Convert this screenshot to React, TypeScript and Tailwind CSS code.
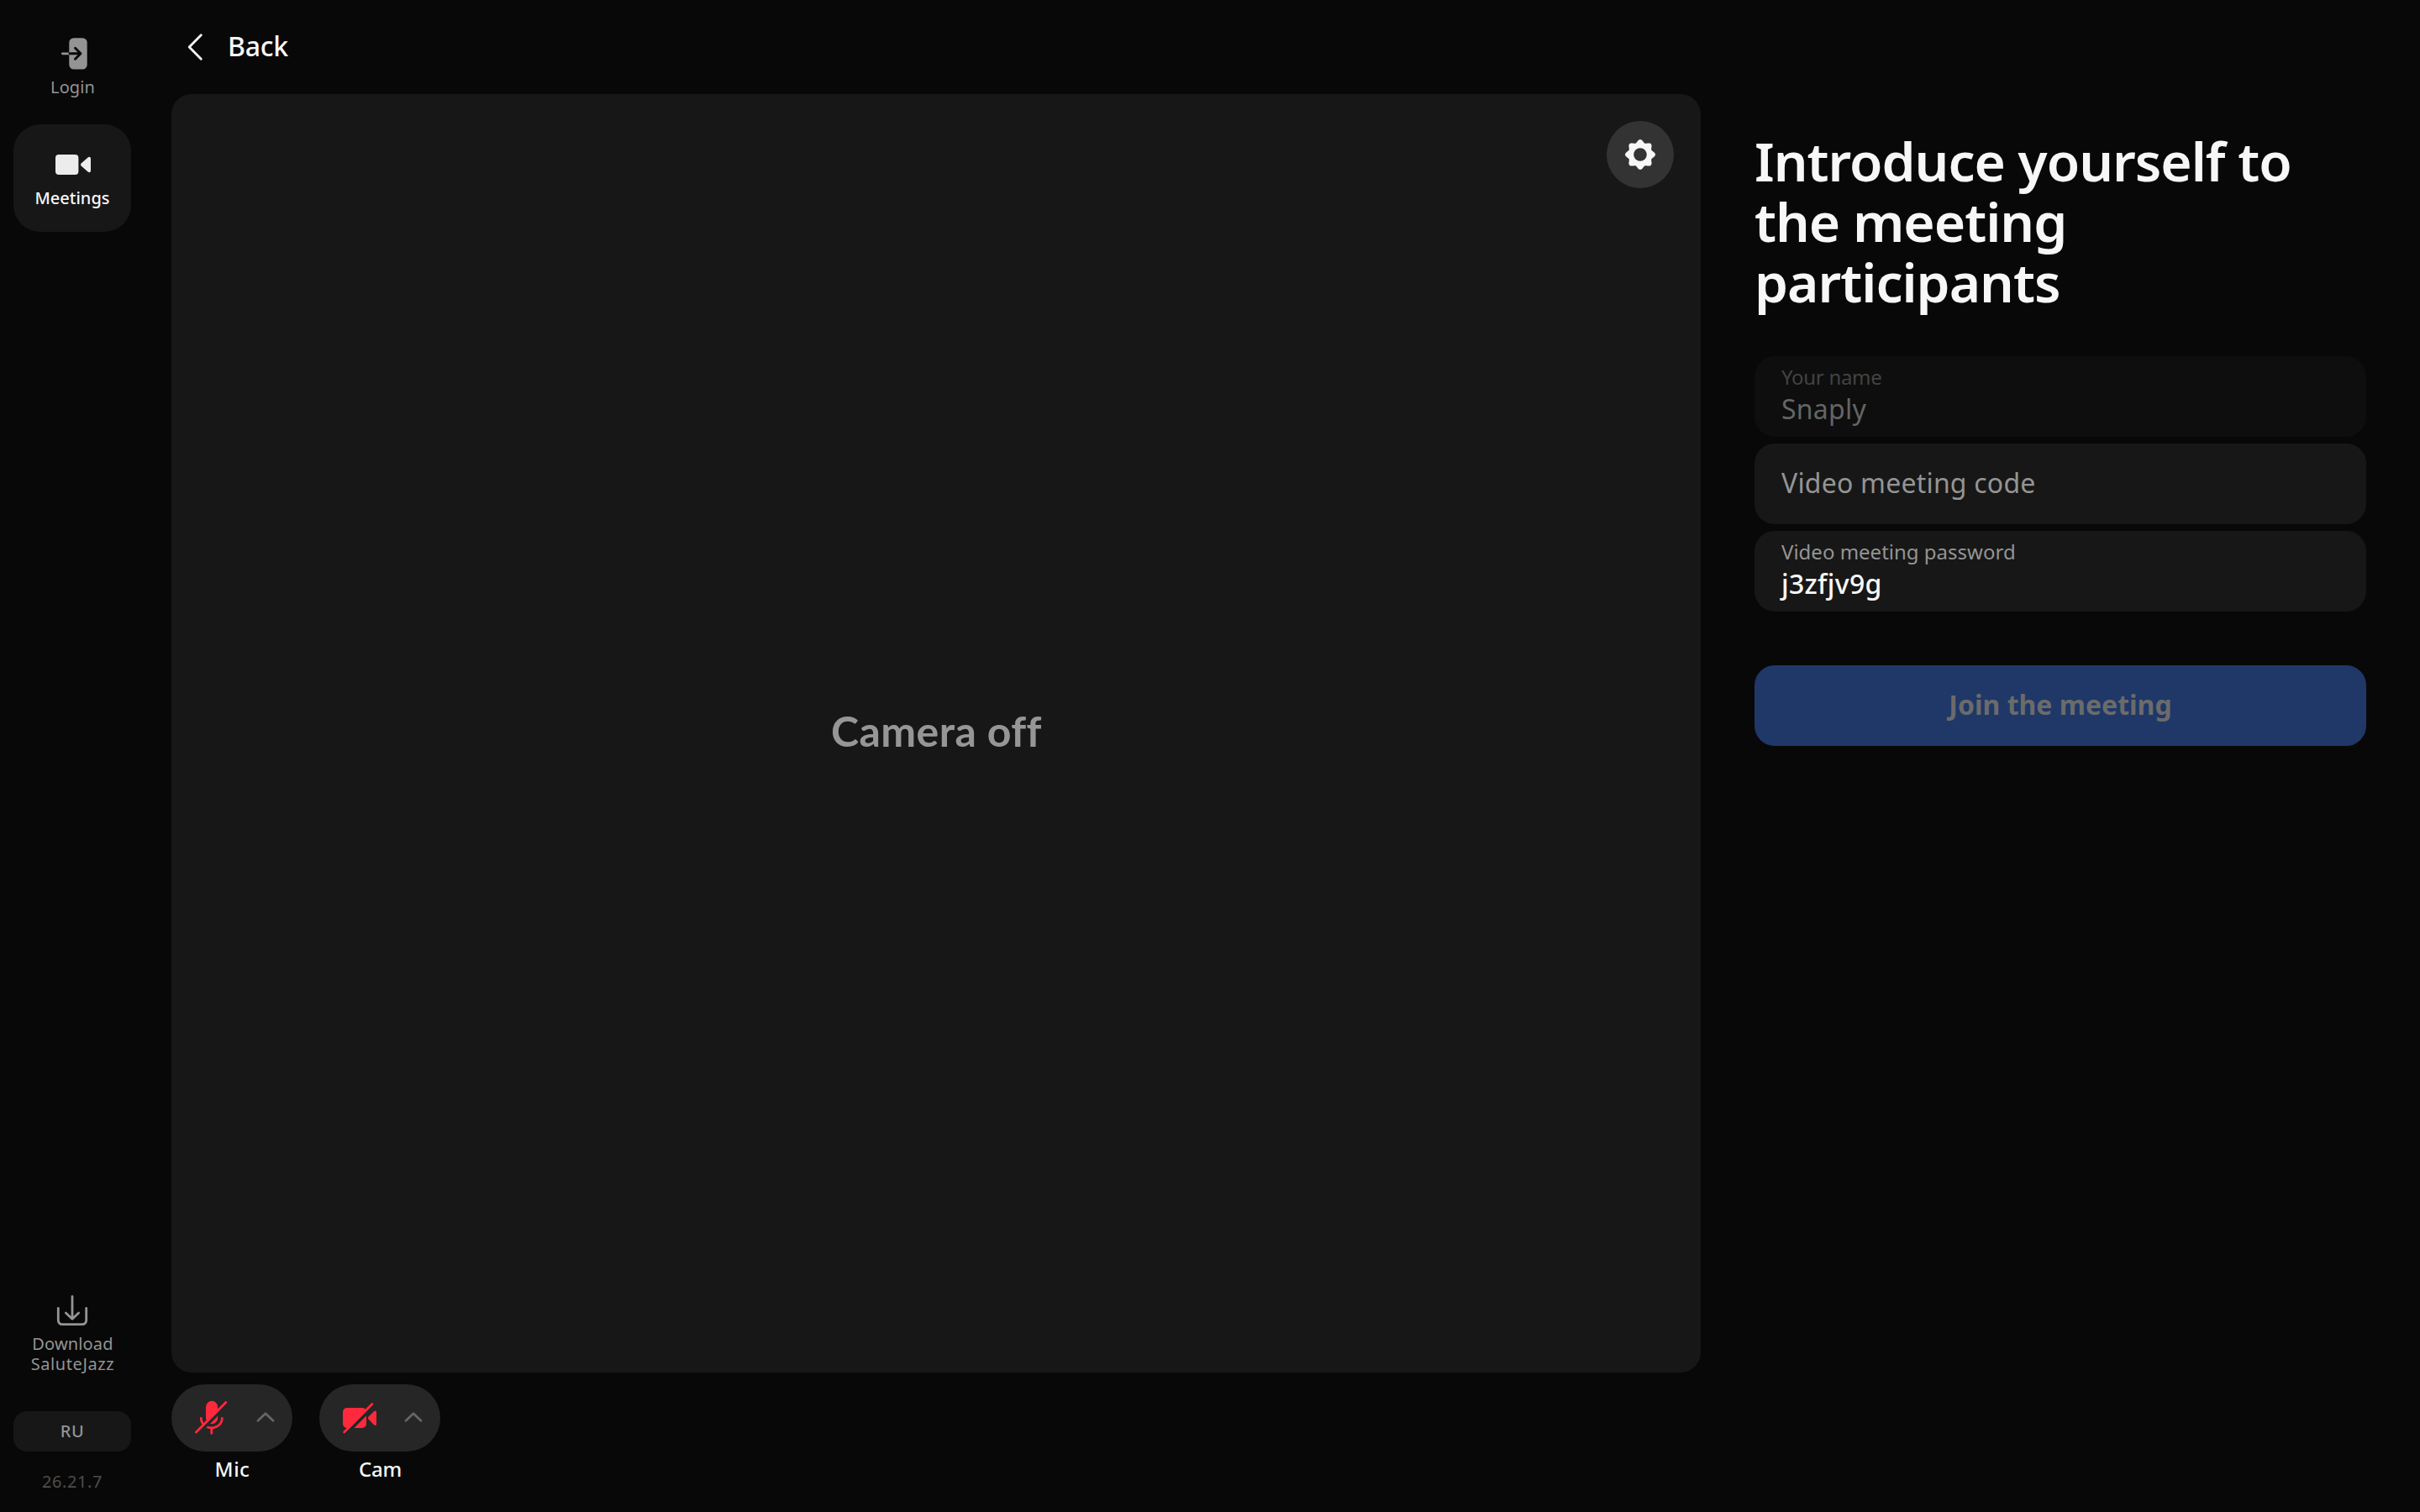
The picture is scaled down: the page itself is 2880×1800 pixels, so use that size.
import type { ReactNode } from 'react';

// Soft eight-tooth outline around the centre of a 48px box
const gearPath =
  Array.from({ length: 144 }, (_, i) => {
    const a = (i / 144) * Math.PI * 2;
    const r = 16.2 + 1.8 * Math.cos(a * 8);
    return `${i ? 'L' : 'M'}${(24 + r * Math.cos(a)).toFixed(2)} ${(24 + r * Math.sin(a)).toFixed(2)}`;
  }).join('') + 'Z';

const LoginIcon = () => (
  <svg viewBox="0 0 48 48" className="size-12" fill="none" strokeLinecap="round" strokeLinejoin="round">
    <rect x="20.3" y="5.2" width="21.4" height="37.3" rx="5.5" fill="currentColor" />
    <path d="M12.3 23.8H20" stroke="currentColor" strokeWidth="2.8" />
    <path d="M21 23.8H33.5M27.5 17.3L34 23.8L27.5 30.3" stroke="#080808" strokeWidth="2.9" />
  </svg>
);

const MeetingsIcon = () => (
  <svg viewBox="0 0 48 48" className="size-12 text-[#ececec]" fill="currentColor">
    <rect x="4" y="12" width="27.4" height="24" rx="4" />
    <path d="M34.6 22.6L42.6 15.4C44.2 14 46 15 46 17V31C46 33 44.2 34 42.6 32.6L34.6 25.4Q33.2 24 34.6 22.6Z" />
  </svg>
);

const DownloadIcon = () => (
  <svg
    viewBox="0 0 48 48"
    className="size-12"
    fill="none"
    stroke="currentColor"
    strokeWidth="2.8"
    strokeLinecap="round"
    strokeLinejoin="round"
  >
    <path d="M24 7.3V33.8M16.4 27L24 34.2L31.6 27" />
    <path d="M7.3 21.3V35.5Q7.3 40.7 12.5 40.7H35.5Q40.7 40.7 40.7 35.5V21.3" />
  </svg>
);

const BackIcon = () => (
  <svg viewBox="0 0 48 48" className="size-12" fill="none" stroke="currentColor" strokeWidth="2.8" strokeLinecap="round" strokeLinejoin="round">
    <path d="M31.3 9.7L17.2 24L31.3 38.3" />
  </svg>
);

const GearIcon = () => (
  <svg viewBox="0 0 48 48" className="size-12">
    <path d={gearPath} fill="currentColor" />
    <circle cx="24" cy="24" r="7.8" fill="#333333" />
  </svg>
);

const MicOffIcon = () => (
  <svg viewBox="0 0 48 48" className="size-12" fill="none" strokeLinecap="round">
    <rect x="17" y="3.8" width="14.2" height="27.4" rx="7.1" fill="currentColor" />
    <path d="M11.3 24.5A12.5 11.3 0 0 0 36.3 24.5M23.8 36V42.3" stroke="currentColor" strokeWidth="2.8" />
    <path d="M5 45.6L44.5 6.1" stroke="#262626" strokeWidth="3.4" strokeLinecap="butt" />
    <path d="M5.4 41L40.8 5.6" stroke="currentColor" strokeWidth="2.8" />
  </svg>
);

const CamOffIcon = () => (
  <svg viewBox="0 0 48 48" className="size-12" fill="none" strokeLinecap="round">
    <rect x="4" y="12" width="28" height="24" rx="5" fill="currentColor" />
    <path
      d="M34.5 22.6L41 16.2C42.4 14.8 44 15.5 44 17.4V31C44 33 42.4 33.6 41 32.2L34.5 25.6Q33.2 24.1 34.5 22.6Z"
      fill="currentColor"
    />
    <path d="M4 46.6L44.5 6.1" stroke="#262626" strokeWidth="4" strokeLinecap="butt" />
    <path d="M5.6 40.9L38.9 7.4" stroke="currentColor" strokeWidth="2.8" />
  </svg>
);

const ChevronUpIcon = () => (
  <svg viewBox="0 0 32 32" className="size-8 text-[#666666]" fill="none" stroke="currentColor" strokeWidth="2.8" strokeLinecap="round" strokeLinejoin="round">
    <path d="M7 19.3L16 10.7L25 19.3" />
  </svg>
);

const DeviceButton = ({ icon, label }: { icon: ReactNode; label: ReactNode }) => (
  <div className="flex w-36 flex-col items-center">
    <button className="flex h-20 w-36 items-center gap-6 rounded-full bg-[#262626] pl-6 text-[#ff293e]">
      {icon}
      <ChevronUpIcon />
    </button>
    <span className="mt-[5px] pl-px text-2xl leading-8 font-medium text-[#f7f7f7]">{label}</span>
  </div>
);

const App = () => {
  return (
    <div className="flex h-[1800px] w-[2880px] bg-[#080808] font-['Noto_Sans',sans-serif] text-[#f7f7f7]">
      {/* Sidebar */}
      <aside className="flex w-[172px] flex-col px-4 pt-4 text-center text-xl leading-6 text-[#949494]">
        <button className="flex h-32 flex-col items-center gap-1 pt-6">
          <LoginIcon />
          <span className="pl-px tracking-[0.1px]">Login</span>
        </button>
        <button className="mt-1 flex h-32 flex-col items-center gap-1 rounded-[32px] bg-[#171717] pt-6 text-[#f7f7f7]">
          <MeetingsIcon />
          <span className="font-medium">Meetings</span>
        </button>

        <div className="mt-auto flex flex-col items-center gap-1">
          <DownloadIcon />
          <div className="pl-px">
            <p className="tracking-[0.15px]">Download</p>
            <p className="tracking-[0.6px]">SaluteJazz</p>
          </div>
        </div>
        <button className="mt-11 h-12 rounded-2xl bg-[#171717] font-medium tracking-[0.5px]">RU</button>
        <p className="mt-6 mb-6 tracking-[0.6px] text-[#4d4d4d]">26.21.7</p>
      </aside>

      {/* Preview */}
      <main className="ml-8 flex w-[1820px] flex-col">
        <header className="flex h-28 items-center gap-[15px] pl-1">
          <BackIcon />
          <span className="pb-[2px] text-[32px] leading-10 font-medium tracking-[-0.2px]">Back</span>
        </header>
        <section className="relative flex h-[1522px] items-center justify-center rounded-3xl bg-[#171717]">
          <button className="absolute top-8 right-8 flex size-20 items-center justify-center rounded-full bg-[#333333]">
            <GearIcon />
          </button>
          <p className="pb-[7px] pl-px font-['Lato',sans-serif] text-[50px] leading-[56px] font-bold tracking-[0.4px] text-[#969696]">
            Camera off
          </p>
        </section>
        <div className="mt-[14px] flex gap-8">
          <DeviceButton icon={<MicOffIcon />} label={<span className="tracking-[0.5px]">Mic</span>} />
          <DeviceButton icon={<CamOffIcon />} label={<span className="tracking-[-0.2px]">Cam</span>} />
        </div>
      </main>

      {/* Join form */}
      <section className="ml-16 w-[728px] pt-[156px]">
        <h1 className="text-[64px] leading-[72px] font-semibold tracking-[-1px]">
          Introduce yourself to
          <br />
          the meeting
          <br />
          participants
        </h1>
        <div className="mt-[52px] flex flex-col gap-2">
          <div className="h-24 rounded-3xl bg-[#0e0e0e] px-8 pt-[9px]">
            <p className="text-2xl leading-8 tracking-[-0.3px] text-[#434343]">Your name</p>
            <p className="mt-[2px] text-[32px] leading-10 tracking-[0.25px] text-[#656565]">Snaply</p>
          </div>
          <div className="flex h-24 items-center rounded-3xl bg-[#171717] px-8 pb-[2px]">
            <p className="text-[32px] leading-10 tracking-[0.2px] text-[#949494]">Video meeting code</p>
          </div>
          <div className="h-24 rounded-3xl bg-[#171717] px-8 pt-[9px]">
            <p className="text-2xl leading-8 text-[#949494]">Video meeting password</p>
            <p className="mt-[2px] text-[32px] leading-10 font-medium tracking-[0.3px]">j3zfjv9g</p>
          </div>
        </div>
        <button className="mt-16 flex h-24 w-full items-center justify-center rounded-3xl bg-[#1f3868] pb-[2px] text-[32px] leading-10 font-bold text-[#6b6b6b]">
          Join the meeting
        </button>
      </section>
    </div>
  );
};

export default App;
